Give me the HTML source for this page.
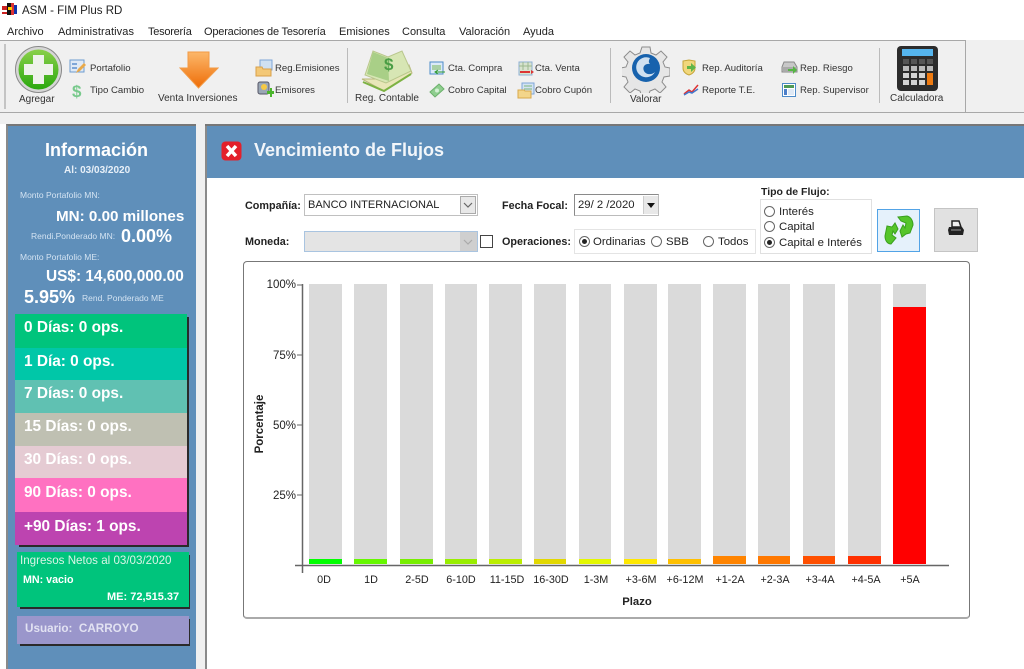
<!DOCTYPE html>
<html lang="es"><head><meta charset="utf-8"><title>ASM - FIM Plus RD</title>
<style>
html,body{margin:0;padding:0;background:#fff}
#p{position:relative;width:1024px;height:669px;overflow:hidden;background:#fff;font-family:"Liberation Sans",sans-serif;color:#222}
#p div,#p svg,#p span.t{position:absolute}
.t{white-space:nowrap;line-height:14px}
.m{font-size:11px;top:25px;color:#222}
.b{font-size:9.6px;color:#333}
.bb{font-size:10px;color:#333}
.w{color:#fff;font-weight:bold;white-space:nowrap}
.l{color:#d3e3f2;font-size:8.5px;white-space:nowrap}
.d{left:15px;width:172px;color:#fff;font-weight:bold;font-size:15.4px;padding-left:9px;box-sizing:border-box;white-space:nowrap}
.f{font-size:10.8px;font-weight:bold;color:#222}
.r{font-size:11.4px;color:#222}
.o{width:11px;height:11px;border:1px solid #666;border-radius:50%;box-sizing:border-box;background:#fff}
.o.c::after{content:"";position:absolute;left:2px;top:2px;width:5px;height:5px;background:#222;border-radius:50%}
</style></head><body><div id="p">
<!-- title bar -->
<svg style="left:2px;top:2px" width="16" height="14" viewBox="0 0 16 14"><rect x="0" y="4" width="5" height="8" fill="#c22"/><rect x="5" y="1" width="5" height="12" fill="#111"/><rect x="9" y="1" width="3" height="12" fill="#d33"/><rect x="12" y="3" width="3" height="9" fill="#13a"/><rect x="6" y="5" width="4" height="3" fill="#fc0"/><rect x="0" y="8" width="5" height="2" fill="#fff"/></svg>
<span class="t" style="left:22px;top:4px;font-size:11.5px;color:#222">ASM - FIM Plus RD</span>
<!-- menu -->
<span class="t m" style="left:7px">Archivo</span><span class="t m" style="left:58px;letter-spacing:.1px">Administrativas</span><span class="t m" style="left:148px;letter-spacing:-.25px">Tesorería</span><span class="t m" style="left:204px;letter-spacing:-.2px">Operaciones de Tesorería</span><span class="t m" style="left:339px">Emisiones</span><span class="t m" style="left:402px">Consulta</span><span class="t m" style="left:459px">Valoración</span><span class="t m" style="left:523px">Ayuda</span>
<!-- toolbar -->
<div style="left:0;top:40px;width:1024px;height:84px;background:#f0f0f0"></div>
<div style="left:0;top:40px;width:966px;height:1px;background:#a8a8a8"></div>
<div style="left:0;top:112px;width:1024px;height:1px;background:#a8a8a8"></div>
<div style="left:965px;top:40px;width:1px;height:73px;background:#a8a8a8"></div>
<div style="left:4px;top:44px;width:2px;height:65px;background:#c4c4c4"></div>
<div style="left:347px;top:48px;width:1px;height:55px;background:#bbb"></div>
<div style="left:610px;top:48px;width:1px;height:55px;background:#bbb"></div>
<div style="left:879px;top:48px;width:1px;height:55px;background:#bbb"></div>
<!-- agregar -->
<svg style="left:14px;top:45px" width="49" height="49" viewBox="0 0 49 49"><defs><linearGradient id="g1" x1="0" y1="0" x2="0" y2="1"><stop offset="0" stop-color="#8ad04a"/><stop offset="1" stop-color="#2aa80d"/></linearGradient></defs><circle cx="24.5" cy="24.5" r="23" fill="#d6d6d6" stroke="#888"/><circle cx="24.5" cy="24.5" r="20" fill="url(#g1)"/><path d="M19 10h11v9h9v11h-9v9H19v-9h-9V19h9z" fill="#eef2ea"/></svg>
<span class="t bb" style="left:19px;top:93px">Agregar</span>
<svg style="left:69px;top:59px" width="18" height="16" viewBox="0 0 18 16"><rect x="1" y="1" width="14" height="12" fill="#dfe9f5" stroke="#6d9bd0"/><rect x="3" y="4" width="5" height="2" fill="#7ea6d8"/><rect x="3" y="8" width="5" height="2" fill="#7ea6d8"/><path d="M7 14l2-4 6-6 2 2-6 6z" fill="#e8a94a"/></svg>
<span class="t b" style="left:90px;top:62px">Portafolio</span>
<svg style="left:71px;top:82px" width="14" height="17" viewBox="0 0 14 17"><text x="1" y="15" font-family="Liberation Sans" font-size="17" font-weight="bold" fill="#78c98c">$</text></svg>
<span class="t b" style="left:90px;top:84px">Tipo Cambio</span>
<!-- venta -->
<svg style="left:179px;top:50px" width="40" height="42" viewBox="0 0 40 42"><defs><linearGradient id="g2" x1="0" y1="0" x2="0" y2="1"><stop offset="0" stop-color="#fcb76a"/><stop offset="1" stop-color="#ee6d07"/></linearGradient></defs><path d="M9 2h21v16h9L19.5 38 1 18h8z" fill="url(#g2)" stroke="#f29a45"/></svg>
<span class="t bb" style="left:158px;top:92px">Venta Inversiones</span>
<svg style="left:255px;top:59px" width="18" height="18" viewBox="0 0 18 18"><rect x="5" y="1" width="12" height="10" fill="#cfe0f2" stroke="#7ea6d8"/><path d="M1 8h6l1 2h8v7H1z" fill="#f3c877" stroke="#d9a04a"/></svg>
<span class="t b" style="left:275px;top:62px">Reg.Emisiones</span>
<svg style="left:257px;top:81px" width="17" height="17" viewBox="0 0 17 17"><rect x="1" y="1" width="11" height="12" rx="2" fill="#9aa7b5" stroke="#556"/><circle cx="7" cy="6" r="3" fill="#f6c945"/><path d="M10 10h3V7h2v3h2v3h-2v3h-2v-3h-3z" fill="#4bb52c"/></svg>
<span class="t b" style="left:275px;top:84px">Emisores</span>
<!-- reg contable -->
<svg style="left:360px;top:49px" width="54" height="43" viewBox="0 0 54 43"><path d="M2 30L24 42 52 24 49 16 24 30z" fill="#e8e6b8" stroke="#b7b779"/><path d="M5 26L13 2l15 6 14-6 9 20-25 12z" fill="#d7e6b4" stroke="#b9c78c"/><path d="M13 3l15 6 1 23L7 25z" fill="#a9cf87"/><text x="24" y="21" font-family="Liberation Sans" font-size="17" font-weight="bold" fill="#4a9d45">$</text><path d="M3 33l21 9 27-17" fill="none" stroke="#7db243" stroke-width="2"/></svg>
<span class="t bb" style="left:355px;top:92px">Reg. Contable</span>
<svg style="left:429px;top:60px" width="17" height="16" viewBox="0 0 17 16"><rect x="1" y="2" width="13" height="12" fill="#dbeaf8" stroke="#4d8bc9"/><rect x="3" y="5" width="9" height="5" fill="#a9d0a6"/><path d="M16 12H6m3-2l-3 2 3 2" stroke="#2e9a2e" fill="none"/></svg>
<span class="t b" style="left:448px;top:62px">Cta. Compra</span>
<svg style="left:429px;top:83px" width="16" height="15" viewBox="0 0 16 15"><path d="M1 9l9-8 5 5-9 8z" fill="#8fce8f" stroke="#6bb06b"/><circle cx="8" cy="7.5" r="2" fill="#d3f0d3"/></svg>
<span class="t b" style="left:448px;top:84px">Cobro Capital</span>
<svg style="left:518px;top:61px" width="17" height="16" viewBox="0 0 17 16"><rect x="1" y="1" width="13" height="13" fill="#d8e3cf" stroke="#8eb0d4"/><path d="M1 5h13M5 1v8M10 1v8" stroke="#9db88f"/><rect x="2" y="10" width="10" height="2" fill="#d33"/><path d="M16 11l-3-2v4z" fill="#d33"/></svg>
<span class="t b" style="left:535px;top:62px">Cta. Venta</span>
<svg style="left:517px;top:82px" width="18" height="17" viewBox="0 0 18 17"><rect x="5" y="1" width="12" height="11" fill="#d3e3f2" stroke="#7ea6d8"/><path d="M7 4h8M7 7h8" stroke="#7cb37c"/><path d="M1 8h6l1 1h6v7H1z" fill="#f3d58a" stroke="#d9a94a"/></svg>
<span class="t b" style="left:535px;top:84px">Cobro Cupón</span>
<!-- valorar -->
<svg style="left:622px;top:45px" width="48" height="48" viewBox="0 0 48 48"><path d="M20 2h8l1 6 5 2 5-4 6 6-4 5 2 5 5 1v8l-6 1-2 5 4 5-6 6-5-4-5 2-1 3h-8l-1-3-5-2-5 4-6-6 4-5-2-5-5-1v-8l5-1 2-5-4-5 6-6 5 4 5-2z" fill="#e6e6e6" stroke="#8c8c8c"/><circle cx="24" cy="23" r="14" fill="#1762ad"/><path d="M28 13a10 10 0 1 0 5 14c-3 3-9 3-11-1s1-8 6-7c-2-2-1-4 0-6z" fill="#cfe0f0"/></svg>
<span class="t bb" style="left:630px;top:93px">Valorar</span>
<svg style="left:682px;top:59px" width="16" height="17" viewBox="0 0 16 17"><path d="M1 2l6-1 6 1v7c0 4-3 6-6 7-3-1-6-3-6-7z" fill="#f1d77c" stroke="#c6a63a"/><path d="M5 7h4V4l5 4.5-5 4.5V10H5z" fill="#5fb548"/></svg>
<span class="t b" style="left:702px;top:62px">Rep. Auditoría</span>
<svg style="left:683px;top:83px" width="17" height="14" viewBox="0 0 17 14"><path d="M1 11l5-4 3 2 6-7" fill="none" stroke="#d33" stroke-width="1.5"/><path d="M1 12l5-3 3 1 6-4" fill="none" stroke="#47c" stroke-width="1.5"/></svg>
<span class="t b" style="left:702px;top:84px">Reporte T.E.</span>
<svg style="left:781px;top:61px" width="17" height="15" viewBox="0 0 17 15"><path d="M3 1h10l3 5v5H1V6z" fill="#c8c8c8" stroke="#888"/><rect x="2" y="6" width="13" height="4" fill="#aaa"/><path d="M7 8h5V5l4 4-4 4v-3H7z" fill="#56b545"/></svg>
<span class="t b" style="left:800px;top:62px">Rep. Riesgo</span>
<svg style="left:782px;top:83px" width="15" height="15" viewBox="0 0 15 15"><rect x=".5" y=".5" width="13" height="13" fill="#fff" stroke="#4d8bc9"/><rect x="2" y="2" width="10" height="3" fill="#4f9a56"/><rect x="2" y="6" width="3" height="6" fill="#4d7fc9"/><rect x="6" y="6" width="6" height="6" fill="#dfe9f5"/></svg>
<span class="t b" style="left:800px;top:84px">Rep. Supervisor</span>
<!-- calc -->
<svg style="left:897px;top:46px" width="42" height="46" viewBox="0 0 42 46"><rect x="0" y="0" width="41" height="45" rx="4" fill="#2c2c2c"/><rect x="5" y="3" width="31" height="7" fill="#55b5ee"/><g fill="#555"><rect x="6" y="13" width="6" height="5"/><rect x="14" y="13" width="6" height="5"/><rect x="22" y="13" width="6" height="5"/><rect x="30" y="13" width="6" height="5"/></g><g fill="#b9b9b9"><rect x="6" y="20" width="6" height="5"/><rect x="14" y="20" width="6" height="5"/><rect x="22" y="20" width="6" height="5"/><rect x="30" y="20" width="6" height="5"/></g><g fill="#d3d3d3"><rect x="6" y="27" width="6" height="5"/><rect x="14" y="27" width="6" height="5"/><rect x="22" y="27" width="6" height="5"/><rect x="6" y="34" width="6" height="5"/><rect x="14" y="34" width="6" height="5"/><rect x="22" y="34" width="6" height="5"/></g><rect x="30" y="27" width="6" height="12" fill="#ee7a10"/></svg>
<span class="t bb" style="left:890px;top:92px">Calculadora</span>

<!-- left panel -->
<div style="left:0;top:124px;width:6px;height:545px;background:#fff"></div>
<div style="left:6px;top:124px;width:190px;height:545px;background:#5f8fba;border-left:2px solid #8a8a8a;border-top:2px solid #777;box-sizing:border-box"></div>
<div style="left:196px;top:124px;width:9px;height:545px;background:#f0f0f0"></div>
<div class="w" style="left:45px;top:140px;font-size:18px;line-height:20px">Información</div>
<div class="w" style="left:64px;top:165px;font-size:10px;line-height:12px;color:#e8f0f8">Al: 03/03/2020</div>
<div class="l" style="left:20px;top:190px;line-height:11px">Monto Portafolio MN:</div>
<div class="w" style="left:56px;top:208px;font-size:15.2px;line-height:17px">MN: 0.00 millones</div>
<div class="l" style="left:31px;top:231px;line-height:11px">Rendi.Ponderado MN:</div>
<div class="w" style="left:121px;top:226px;font-size:18px;line-height:21px">0.00%</div>
<div class="l" style="left:20px;top:252px;line-height:11px">Monto Portafolio ME:</div>
<div class="w" style="left:46px;top:268px;font-size:15.4px;line-height:17px">US$: 14,600,000.00</div>
<div class="w" style="left:24px;top:287px;font-size:18px;line-height:21px">5.95%</div>
<div class="l" style="left:82px;top:293px;line-height:11px">Rend. Ponderado ME</div>
<!-- days -->
<div style="left:19px;top:317px;width:170px;height:230px;background:#2a2a2a"></div>
<div class="d" style="top:314px;height:34px;line-height:27px;background:#00c47c">0 Días: 0 ops.</div>
<div class="d" style="top:348px;height:32px;line-height:27px;background:#00c7a8">1 Día: 0 ops.</div>
<div class="d" style="top:380px;height:33px;line-height:27px;background:#60c1b2">7 Días: 0 ops.</div>
<div class="d" style="top:413px;height:33px;line-height:27px;background:#bfc0b2">15 Días: 0 ops.</div>
<div class="d" style="top:446px;height:32px;line-height:27px;background:#e5cbd3">30 Días: 0 ops.</div>
<div class="d" style="top:478px;height:34px;line-height:29px;background:#ff71c1">90 Días: 0 ops.</div>
<div class="d" style="top:512px;height:33px;line-height:29px;background:#bd44b0">+90 Días: 1 ops.</div>
<!-- ingresos -->
<div style="left:20px;top:555px;width:170px;height:54px;background:#2a2a2a"></div>
<div style="left:17px;top:552px;width:172px;height:55px;background:#00c47c"></div>
<div style="left:20px;top:554px;font-size:11.6px;line-height:14px;color:#d8f4e6;white-space:nowrap">Ingresos Netos al 03/03/2020</div>
<div class="w" style="left:23px;top:574px;font-size:10.7px;line-height:13px">MN: vacio</div>
<div class="w" style="left:107px;top:591px;font-size:11px;line-height:13px">ME: 72,515.37</div>
<!-- usuario -->
<div style="left:20px;top:619px;width:170px;height:27px;background:#2a2a2a"></div>
<div style="left:17px;top:616px;width:172px;height:28px;background:#9a96cb"></div>
<div style="left:25px;top:622px;font-size:11.7px;font-weight:bold;line-height:14px;color:#e2e2f2;white-space:nowrap">Usuario:&nbsp; CARROYO</div>

<!-- main -->
<div style="left:205px;top:124px;width:819px;height:545px;background:#fff;border-left:2px solid #8a8a8a;box-sizing:border-box"></div>
<div style="left:205px;top:124px;width:819px;height:2px;background:#777"></div>
<div style="left:207px;top:126px;width:817px;height:52px;background:#5f8fba"></div>
<svg style="left:221px;top:141px" width="21" height="20" viewBox="0 0 21 20"><rect x=".5" y=".5" width="20" height="19" rx="4" fill="#e3202b"/><path d="M6 5l9 10M15 5L6 15" stroke="#fff" stroke-width="3.5"/></svg>
<div class="w" style="left:254px;top:140px;font-size:18px;line-height:21px;color:#f2f6fa">Vencimiento de Flujos</div>
<!-- form -->
<span class="t f" style="left:245px;top:199px">Compañía:</span>
<div style="left:304px;top:194px;width:174px;height:22px;border:1px solid #c0c0c0;box-sizing:border-box;background:#fff"></div>
<span class="t r" style="left:308px;top:198px;font-size:11px">BANCO INTERNACIONAL</span>
<div style="left:460px;top:196px;width:16px;height:18px;background:#e8e8e8;border:1px solid #aaa;box-sizing:border-box"></div>
<svg style="left:463px;top:202px" width="10" height="6" viewBox="0 0 10 6"><path d="M1 1l4 4 4-4" fill="none" stroke="#666" stroke-width="1.2"/></svg>
<span class="t f" style="left:502px;top:199px">Fecha Focal:</span>
<div style="left:574px;top:194px;width:85px;height:22px;border:1px solid #8a8a8a;border-right-color:#bbb;border-bottom-color:#bbb;box-sizing:border-box;background:#fff"></div>
<span class="t r" style="left:578px;top:198px;font-size:11.3px">29/ 2 /2020</span>
<div style="left:643px;top:196px;width:14px;height:18px;background:#e8e8e8;border-left:1px solid #ccc"></div>
<svg style="left:647px;top:203px" width="8" height="5" viewBox="0 0 8 5"><path d="M0 0h8L4 5z" fill="#111"/></svg>
<span class="t f" style="left:245px;top:235px">Moneda:</span>
<div style="left:304px;top:231px;width:174px;height:21px;border:1px solid #a9c4e0;box-sizing:border-box;background:#e4e4e4"></div>
<div style="left:460px;top:232px;width:17px;height:19px;background:#cfcfcf"></div>
<svg style="left:463px;top:239px" width="10" height="6" viewBox="0 0 10 6"><path d="M1 1l4 4 4-4" fill="none" stroke="#aaa" stroke-width="1.2"/></svg>
<div style="left:480px;top:235px;width:13px;height:13px;border:1px solid #444;box-sizing:border-box;background:#fff"></div>
<span class="t f" style="left:502px;top:235px">Operaciones:</span>
<div style="left:574px;top:229px;width:182px;height:25px;border:1px solid #e4e4e4;box-sizing:border-box"></div>
<div class="o c" style="left:579px;top:236px"></div><span class="t r" style="left:593px;top:235px">Ordinarias</span>
<div class="o" style="left:651px;top:236px"></div><span class="t r" style="left:666px;top:235px">SBB</span>
<div class="o" style="left:703px;top:236px"></div><span class="t r" style="left:718px;top:235px">Todos</span>
<span class="t f" style="left:761px;top:185px;font-size:10.5px">Tipo de Flujo:</span>
<div style="left:760px;top:199px;width:112px;height:55px;border:1px solid #e0e0e0;box-sizing:border-box"></div>
<div class="o" style="left:764px;top:206px"></div><span class="t r" style="left:779px;top:205px">Interés</span>
<div class="o" style="left:764px;top:221px"></div><span class="t r" style="left:779px;top:220px">Capital</span>
<div class="o c" style="left:764px;top:237px"></div><span class="t r" style="left:779px;top:236px">Capital e Interés</span>
<div style="left:877px;top:209px;width:43px;height:43px;background:#e5f1fb;border:1px solid #52a3e6;box-sizing:border-box"></div>
<svg style="left:883px;top:215px" width="31" height="31" viewBox="0 0 31 31"><path d="M2 21l2-10 5 1 3-4 3 6-3 5-2-3-1 4 4 3-5 6c-4 0-6-4-6-8z" fill="#55c52a" stroke="#3aa01d"/><path d="M15 2l9-1c4 1 6 5 6 9l-3 8-4 1-4 3-2-6 3-6 2 3 1-5-5-2z" fill="#55c52a" stroke="#3aa01d"/></svg>
<div style="left:934px;top:208px;width:44px;height:44px;background:#e1e1e1;border:1px solid #c4c4c4;box-sizing:border-box"></div>
<svg style="left:947px;top:220px" width="18" height="17" viewBox="0 0 18 17"><path d="M5 1h7l2 6H5z" fill="#eee" stroke="#222" stroke-width="1.5"/><path d="M2 7h13l2 3-1 5H2l-1-5z" fill="#222"/><path d="M4 10h10" stroke="#999"/></svg>
<!-- chart -->
<div style="left:243px;top:261px;width:727px;height:358px;border:1px solid #777;border-bottom:2px solid #aaa;border-radius:4px;box-sizing:border-box;background:#fff"></div>
<svg style="left:0;top:0" width="1024" height="669" viewBox="0 0 1024 669" font-family="Liberation Sans" font-size="10" fill="#222">
<g fill="#dadada"><rect x="309" y="284" width="33" height="280"/><rect x="354" y="284" width="33" height="280"/><rect x="400" y="284" width="33" height="280"/><rect x="445" y="284" width="32" height="280"/><rect x="489" y="284" width="33" height="280"/><rect x="534" y="284" width="32" height="280"/><rect x="579" y="284" width="32" height="280"/><rect x="624" y="284" width="33" height="280"/><rect x="668" y="284" width="33" height="280"/><rect x="713" y="284" width="33" height="280"/><rect x="758" y="284" width="32" height="280"/><rect x="803" y="284" width="32" height="280"/><rect x="848" y="284" width="33" height="280"/><rect x="893" y="284" width="33" height="280"/></g>
<rect x="309" y="559" width="33" height="5" fill="#00ff00"/><rect x="354" y="559" width="33" height="5" fill="#66f800"/><rect x="400" y="559" width="33" height="5" fill="#77ee00"/><rect x="445" y="559" width="32" height="5" fill="#99ee00"/><rect x="489" y="559" width="33" height="5" fill="#bbee00"/><rect x="534" y="559" width="32" height="5" fill="#e2d800"/><rect x="579" y="559" width="32" height="5" fill="#e4f800"/><rect x="624" y="559" width="33" height="5" fill="#ffe800"/><rect x="668" y="559" width="33" height="5" fill="#ffc000"/><rect x="713" y="556" width="33" height="8" fill="#ff8400"/><rect x="758" y="556" width="32" height="8" fill="#ff7800"/><rect x="803" y="556" width="32" height="8" fill="#ff5000"/><rect x="848" y="556" width="33" height="8" fill="#ff3000"/><rect x="893" y="307" width="33" height="257" fill="#ff0000"/>
<path d="M295 565.5H949M302.5 284V573" stroke="#666" stroke-width="1.5" fill="none"/>
<path d="M297 285h5M297 355h5M297 425h5M297 495h5" stroke="#666"/>
<g text-anchor="end" font-size="11.5"><text x="296" y="288">100%</text><text x="296" y="359">75%</text><text x="296" y="429">50%</text><text x="296" y="499">25%</text></g>
<text transform="translate(263 424) rotate(-90)" text-anchor="middle" font-weight="bold" font-size="11.5">Porcentaje</text>
<g text-anchor="middle" font-size="10.8"><text x="324" y="583">0D</text><text x="371" y="583">1D</text><text x="417" y="583">2-5D</text><text x="461" y="583">6-10D</text><text x="507" y="583">11-15D</text><text x="551" y="583">16-30D</text><text x="596" y="583">1-3M</text><text x="641" y="583">+3-6M</text><text x="685" y="583">+6-12M</text><text x="730" y="583">+1-2A</text><text x="775" y="583">+2-3A</text><text x="820" y="583">+3-4A</text><text x="866" y="583">+4-5A</text><text x="910" y="583">+5A</text></g>
<text x="637" y="605" text-anchor="middle" font-weight="bold" font-size="11.3">Plazo</text>
</svg>
</div></body></html>
